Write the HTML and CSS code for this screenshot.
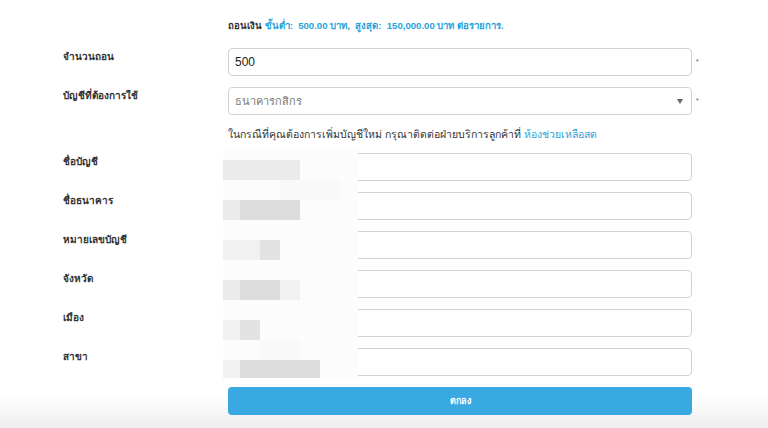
FILE: index.html
```html
<!DOCTYPE html>
<html lang="th">
<head>
<meta charset="utf-8">
<title>ถอนเงิน</title>
<link rel="stylesheet" href="styles.css">
</head>
<body>
<div class="page">
  <form class="form">
    <div class="lbl"></div>
    <div class="note top">ถอนเงิน <span class="blue strong">ขั้นต่ำ:&nbsp; 500.00 บาท,&nbsp; สูงสุด:&nbsp; 150,000.00 บาท ต่อรายการ.</span></div>
    <div></div>

    <label class="lbl">จำนวนถอน</label>
    <div class="field"><input class="input" type="text" value="500"></div>
    <div class="req">*</div>

    <label class="lbl">บัญชีที่ต้องการใช้</label>
    <div class="field select"><span class="placeholder">ธนาคารกสิกร</span><span class="caret"></span></div>
    <div class="req">*</div>

    <div class="lbl"></div>
    <div class="note info">ในกรณีที่คุณต้องการเพิ่มบัญชีใหม่ กรุณาติดต่อฝ่ายบริการลูกค้าที่ <a class="blue link" href="#">ห้องช่วยเหลือสด</a></div>
    <div></div>

    <label class="lbl">ชื่อบัญชี</label>
    <div class="field"><div class="input"></div></div>
    <div></div>

    <label class="lbl">ชื่อธนาคาร</label>
    <div class="field"><div class="input"></div></div>
    <div></div>

    <label class="lbl">หมายเลขบัญชี</label>
    <div class="field"><div class="input"></div></div>
    <div></div>

    <label class="lbl">จังหวัด</label>
    <div class="field"><div class="input"></div></div>
    <div></div>

    <label class="lbl">เมือง</label>
    <div class="field"><div class="input"></div></div>
    <div></div>

    <label class="lbl">สาขา</label>
    <div class="field"><div class="input"></div></div>
    <div></div>

    <div></div>
    <button class="btn" type="button">ตกลง</button>
    <div></div>

    <div class="mosaic" aria-hidden="true">
      <div class="m m-r2 m-c1-4 g1"></div>
      <div class="m m-r4 m-c1 g1"></div>
      <div class="m m-r4 m-c2-4 g3"></div>
      <div class="m m-r6 m-c1-2 g0"></div>
      <div class="m m-r6 m-c3 g2"></div>
      <div class="m m-r8 m-c1 g1"></div>
      <div class="m m-r8 m-c2-3 g3"></div>
      <div class="m m-r8 m-c4 g0"></div>
      <div class="m m-r10 m-c1 g0"></div>
      <div class="m m-r10 m-c2 g2"></div>
      <div class="m m-r12 m-c1 g0"></div>
      <div class="m m-r12 m-c2-5 g3"></div>
      <div class="m m-r3 m-c4-6 g00"></div>
      <div class="m m-r11 m-c3-4 g00"></div>
    </div>
  </form>
</div>
</body>
</html>
```
FILE: styles.css
```css
html {
  height: 100%;
  background: linear-gradient(to bottom, #ffffff 0, #ffffff 396px, #eeeeee 428px);
}
body {
  margin: 0;
  font-family: "Liberation Sans", "Noto Sans", "DejaVu Sans", sans-serif;
  color: #333;
}
.page {
  padding: 19px 0 0 63px;
}
.form {
  position: relative;
  display: grid;
  grid-template-columns: 165px 464px 20px;
  row-gap: 11px;
  align-items: start;
}
.lbl {
  font-size: 10px;
  font-weight: bold;
  line-height: 14px;
  padding-top: 2px;
  color: #333;
}
.note {
  font-size: 10px;
  line-height: 14px;
  height: 14px;
  margin-bottom: 4px;
  white-space: nowrap;
}
.note.top {
  font-size: 9.6px;
  font-weight: 600;
}
.note.info {
  margin: 1px 0 1px;
  font-size: 10.5px;
}
.blue {
  color: #2ba3d8;
}
.strong {
  font-weight: bold;
}
.link {
  text-decoration: none;
}
.field {
  position: relative;
  height: 28px;
}
.input {
  box-sizing: border-box;
  width: 100%;
  height: 28px;
  margin: 0;
  border: 1px solid #d2d2d2;
  border-radius: 4px;
  padding: 0 6px;
  font: 12px "Liberation Sans", "Noto Sans", "DejaVu Sans", sans-serif;
  color: #222;
  background: #fff;
  outline: none;
}
.select {
  box-sizing: border-box;
  border: 1px solid #d2d2d2;
  border-radius: 4px;
  display: flex;
  align-items: center;
  justify-content: space-between;
  padding: 0 8px 0 6px;
}
.placeholder {
  font-size: 11px;
  color: #7a7a7a;
}
.caret {
  width: 0;
  height: 0;
  border-left: 3.5px solid transparent;
  border-right: 3.5px solid transparent;
  border-top: 5px solid #666;
}
.req {
  font-size: 7px;
  line-height: 28px;
  height: 28px;
  padding-left: 4px;
  color: #555;
}
.btn {
  height: 28px;
  border: 0;
  border-radius: 4px;
  background: #38a9e1;
  color: #fff;
  font: bold 9px "Liberation Sans", "Noto Sans", "DejaVu Sans", sans-serif;
  cursor: pointer;
}
/* pixelated redaction over the left part of the read-only fields */
.mosaic {
  position: absolute;
  left: 160px;
  top: 131px;
  width: 135px;
  height: 228px;
  background: #fcfcfc;
  display: grid;
  grid-template-columns: 17px 20px 20px 20px 20px 20px 18px;
  grid-template-rows: 10px repeat(10, 20px) 18px;
}
.m-r2 { grid-row: 2; }
.m-r3 { grid-row: 3; }
.m-r4 { grid-row: 4; }
.m-r6 { grid-row: 6; }
.m-r8 { grid-row: 8; }
.m-r10 { grid-row: 10; }
.m-r11 { grid-row: 11; }
.m-r12 { grid-row: 12; }
.m-c1 { grid-column: 1; }
.m-c2 { grid-column: 2; }
.m-c3 { grid-column: 3; }
.m-c4 { grid-column: 4; }
.m-c1-2 { grid-column: 1 / 3; }
.m-c1-4 { grid-column: 1 / 5; }
.m-c2-3 { grid-column: 2 / 4; }
.m-c2-4 { grid-column: 2 / 5; }
.m-c2-5 { grid-column: 2 / 6; }
.m-c3-4 { grid-column: 3 / 5; }
.m-c4-6 { grid-column: 4 / 7; }
.g00 { background: #f9f9f9; }
.g0 { background: #f1f1f1; }
.g1 { background: #ebebeb; }
.g2 { background: #e2e2e2; }
.g3 { background: #dcdcdc; }
```
